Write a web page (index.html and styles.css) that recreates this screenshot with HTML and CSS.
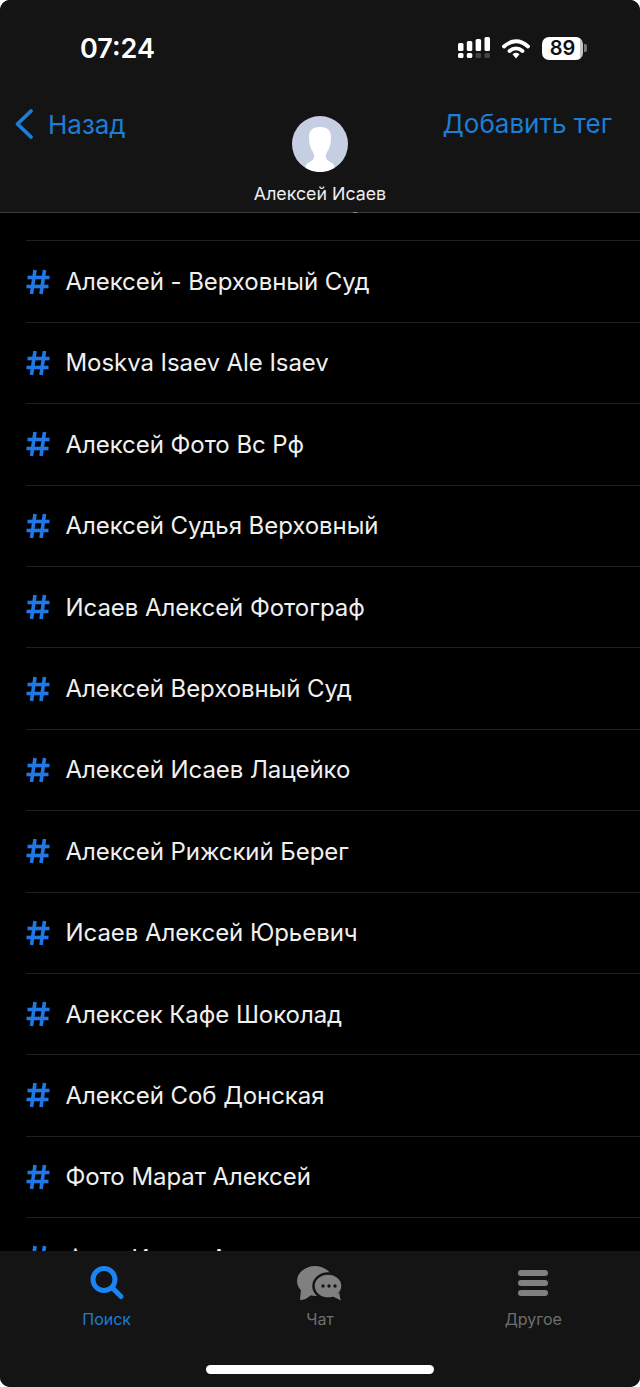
FILE: index.html
```html
<!DOCTYPE html>
<html>
    <head>
        <title>Теги</title>
        <meta charset=utf8>
        <link rel="stylesheet" href="styles.css">
    </head>
    <body>
        <div id="app">
            <div id="header">
                <div id="status">
                    <div id="time">07:24</div>
                    <div id="status-icons">
                        <svg width="32" height="22" viewBox="0 0 32 22" class="signal">
                            <rect x="0" y="6" width="5.500" height="8" rx="1.5" fill="#fff"/>
                            <rect x="0" y="16" width="5.500" height="5" rx="1.5" fill="#fff"/>
                            <rect x="8.800" y="4" width="5.500" height="10" rx="1.5" fill="#fff"/>
                            <rect x="8.800" y="16" width="5.500" height="5" rx="1.5" fill="#fff"/>
                            <rect x="17.600" y="2" width="5.500" height="12" rx="1.5" fill="#fff"/>
                            <rect x="17.600" y="16" width="5.500" height="5" rx="1.5" fill="#444"/>
                            <rect x="26.500" y="0" width="5.500" height="14" rx="1.5" fill="#fff"/>
                            <rect x="26.500" y="16" width="5.500" height="5" rx="1.5" fill="#444"/>
                        </svg>
                        <svg width="28" height="21" viewBox="0 0 28 21" class="wifi">
                            <path d="M2 8.500C9.500 1.500 18.500 1.500 26 8.500" fill="none" stroke="#fff" stroke-width="3.800" stroke-linecap="round"/>
                            <path d="M7.500 13C11.500 9.500 16.500 9.500 20.500 13" fill="none" stroke="#fff" stroke-width="3.800" stroke-linecap="round"/>
                            <path d="M10.500 16.200C12.800 14.400 15.200 14.400 17.500 16.200L14 20.500Z" fill="#fff"/>
                        </svg>
                        <div id="battery"><span>89</span></div>
                        <div id="battery-nub"></div>
                    </div>
                </div>
                <div id="nav">
                    <div class="nav-back">
                        <svg width="20" height="32" viewBox="0 0 20 32">
                            <path d="M17 3L3.500 16L17 29" fill="none" stroke="#1c7ed6" stroke-width="3.800" stroke-linecap="round" stroke-linejoin="round"/>
                        </svg>
                        <span>Назад</span>
                    </div>
                    <div class="nav-add">Добавить тег</div>
                    <div class="nav-person">
                        <svg width="56" height="56" viewBox="0 0 56 56" class="avatar">
                            <circle cx="28" cy="28" r="28" fill="#c6cee3"/>
                            <path d="M13.500 52L14 49C16 46 21 45 22 42C22.500 40 22 38 21 36C18 32 17 27 17 21C17 14 21 11 28 11C35 11 39 14 39 21C39 27 38 32 35 36C34 38 33.500 40 34 42C35 45 40 46 42 49L42.500 52A28 28 0 0 1 13.500 52Z" fill="#fff"/>
                        </svg>
                        <div class="name">Алексей Исаев</div>
                    </div>
                </div>
            </div>
            <div id="list">
                <div id="rows">
                    <div class="row"></div>
                    <div class="row"><svg class="hash" viewBox="0 0 24 26"><use href="#hash"/></svg><span class="tag">Алексей - Верховный Суд</span></div>
                    <div class="row"><svg class="hash" viewBox="0 0 24 26"><use href="#hash"/></svg><span class="tag">Moskva Isaev Ale Isaev</span></div>
                    <div class="row"><svg class="hash" viewBox="0 0 24 26"><use href="#hash"/></svg><span class="tag">Алексей Фото Вс Рф</span></div>
                    <div class="row"><svg class="hash" viewBox="0 0 24 26"><use href="#hash"/></svg><span class="tag">Алексей Судья Верховный</span></div>
                    <div class="row"><svg class="hash" viewBox="0 0 24 26"><use href="#hash"/></svg><span class="tag">Исаев Алексей Фотограф</span></div>
                    <div class="row"><svg class="hash" viewBox="0 0 24 26"><use href="#hash"/></svg><span class="tag">Алексей Верховный Суд</span></div>
                    <div class="row"><svg class="hash" viewBox="0 0 24 26"><use href="#hash"/></svg><span class="tag">Алексей Исаев Лацейко</span></div>
                    <div class="row"><svg class="hash" viewBox="0 0 24 26"><use href="#hash"/></svg><span class="tag">Алексей Рижский Берег</span></div>
                    <div class="row"><svg class="hash" viewBox="0 0 24 26"><use href="#hash"/></svg><span class="tag">Исаев Алексей Юрьевич</span></div>
                    <div class="row"><svg class="hash" viewBox="0 0 24 26"><use href="#hash"/></svg><span class="tag">Алексек Кафе Шоколад</span></div>
                    <div class="row"><svg class="hash" viewBox="0 0 24 26"><use href="#hash"/></svg><span class="tag">Алексей Соб Донская</span></div>
                    <div class="row"><svg class="hash" viewBox="0 0 24 26"><use href="#hash"/></svg><span class="tag">Фото Марат Алексей</span></div>
                    <div class="row"><svg class="hash" viewBox="0 0 24 26"><use href="#hash"/></svg><span class="tag">Фото Исаев Анна</span></div>
                </div>
            </div>
            <div id="tabs">
                <div class="tab active">
                    <svg width="36" height="36" viewBox="0 0 36 36">
                        <circle cx="15" cy="14.500" r="11" fill="none" stroke="#1a85f0" stroke-width="5"/>
                        <path d="M23.500 23L32 31.500" fill="none" stroke="#1a85f0" stroke-width="5" stroke-linecap="round"/>
                    </svg>
                    <div class="tab-label">Поиск</div>
                </div>
                <div class="tab">
                    <svg width="48" height="36" viewBox="0 0 48 36">
                        <ellipse cx="19" cy="16" rx="18" ry="15" fill="#808080"/>
                        <path d="M5 24L4 35C8 35 12 33 15 30Z" fill="#808080"/>
                        <ellipse cx="32" cy="21" rx="14.500" ry="12.500" fill="#808080" stroke="#141414" stroke-width="2.500"/>
                        <path d="M36 31L45 35.500C44 33 43.500 31 43.500 28Z" fill="#808080"/>
                        <circle cx="27" cy="21" r="1.700" fill="#141414"/>
                        <circle cx="33" cy="21" r="1.700" fill="#141414"/>
                        <circle cx="39" cy="21" r="1.700" fill="#141414"/>
                    </svg>
                    <div class="tab-label">Чат</div>
                </div>
                <div class="tab">
                    <svg width="36" height="36" viewBox="0 0 36 36">
                        <rect x="3" y="5" width="30" height="6" rx="3" fill="#808080"/>
                        <rect x="3" y="15" width="30" height="6" rx="3" fill="#808080"/>
                        <rect x="3" y="25" width="30" height="6" rx="3" fill="#808080"/>
                    </svg>
                    <div class="tab-label">Другое</div>
                </div>
                <div id="home-indicator"></div>
            </div>
        </div>
        <svg width="0" height="0" class="defs">
            <defs>
                <g id="hash" fill="none" stroke="#1f78e6" stroke-width="3.600">
                    <path d="M9 1L5.500 25"/>
                    <path d="M18.500 1L15 25"/>
                    <path d="M1.500 8.500H23.500"/>
                    <path d="M0.500 17.500H22.500"/>
                </g>
            </defs>
        </svg>
    </body>
</html>
```

FILE: styles.css
```css
html {
    background-color: #fff;
}
body {
    margin: 0;
    padding: 0;
    font-family: Inter, "Noto Sans", sans-serif;
    color: #fff;
}
.defs {
    position: absolute;
}
#app {
    display: flex;
    flex-direction: column;
    width: 640px;
    height: 1387px;
    overflow: hidden;
    border-radius: 10px;
    background-color: #000;
}
#header {
    position: relative;
    flex: none;
    height: 212px;
    background-color: #141414;
    border-bottom: 1px solid #3c3c3e;
}
/* tail of the row scrolled under the bar */
#header::after {
    content: "";
    position: absolute;
    left: 353px;
    bottom: -1px;
    width: 4px;
    height: 1px;
    background-color: #8a8a8a;
}
#status {
    display: flex;
    justify-content: space-between;
    align-items: center;
    height: 96px;
    padding: 0 53px 0 80px;
}
#time {
    font-size: 27px;
    font-weight: 600;
}
#status-icons {
    display: flex;
    align-items: center;
}
.signal {
    margin-right: 12px;
}
.wifi {
    margin-right: 12px;
}
#battery {
    display: flex;
    align-items: center;
    justify-content: center;
    width: 41px;
    height: 23px;
    border-radius: 7px;
    background: linear-gradient(to right, #fff 92%, #c4c4c4 92%);
    color: #111;
    font-size: 20px;
    font-weight: 600;
}
#battery-nub {
    width: 3px;
    height: 8px;
    margin-left: 1px;
    border-radius: 0 2px 2px 0;
    background-color: #777;
}
#nav {
    position: relative;
    display: flex;
    justify-content: space-between;
    padding: 12px 28px 0 14px;
    font-size: 26px;
    color: #1c7ed6;
}
.nav-back {
    display: flex;
    align-items: center;
    gap: 14px;
}
.nav-person {
    position: absolute;
    top: 20px;
    left: 0;
    right: 0;
    display: flex;
    flex-direction: column;
    align-items: center;
}
.avatar {
    display: block;
}
.name {
    margin-top: 11px;
    font-size: 17.800px;
    color: #eee;
}
#list {
    flex: 1;
    overflow: hidden;
}
#rows {
    margin-top: -53px;
}
.row {
    box-sizing: border-box;
    display: flex;
    align-items: center;
    gap: 15.500px;
    height: 81.400px;
    margin-left: 26px;
    border-bottom: 1px solid #1f1f21;
}
.hash {
    flex: none;
    width: 24px;
    height: 26px;
}
.tag {
    font-size: 24px;
    letter-spacing: -0.060px;
    color: #f0f0f0;
}
#tabs {
    position: relative;
    flex: none;
    display: flex;
    height: 136px;
    background-color: #141414;
}
.tab {
    flex: 1;
    display: flex;
    flex-direction: column;
    align-items: center;
    padding-top: 14px;
}
.tab-label {
    margin-top: 8px;
    font-size: 16px;
    color: #6e6e6e;
}
.tab.active .tab-label {
    color: #1c7ed6;
}
#home-indicator {
    position: absolute;
    left: 206px;
    bottom: 13px;
    width: 228px;
    height: 9px;
    border-radius: 5px;
    background-color: #fff;
}
```
